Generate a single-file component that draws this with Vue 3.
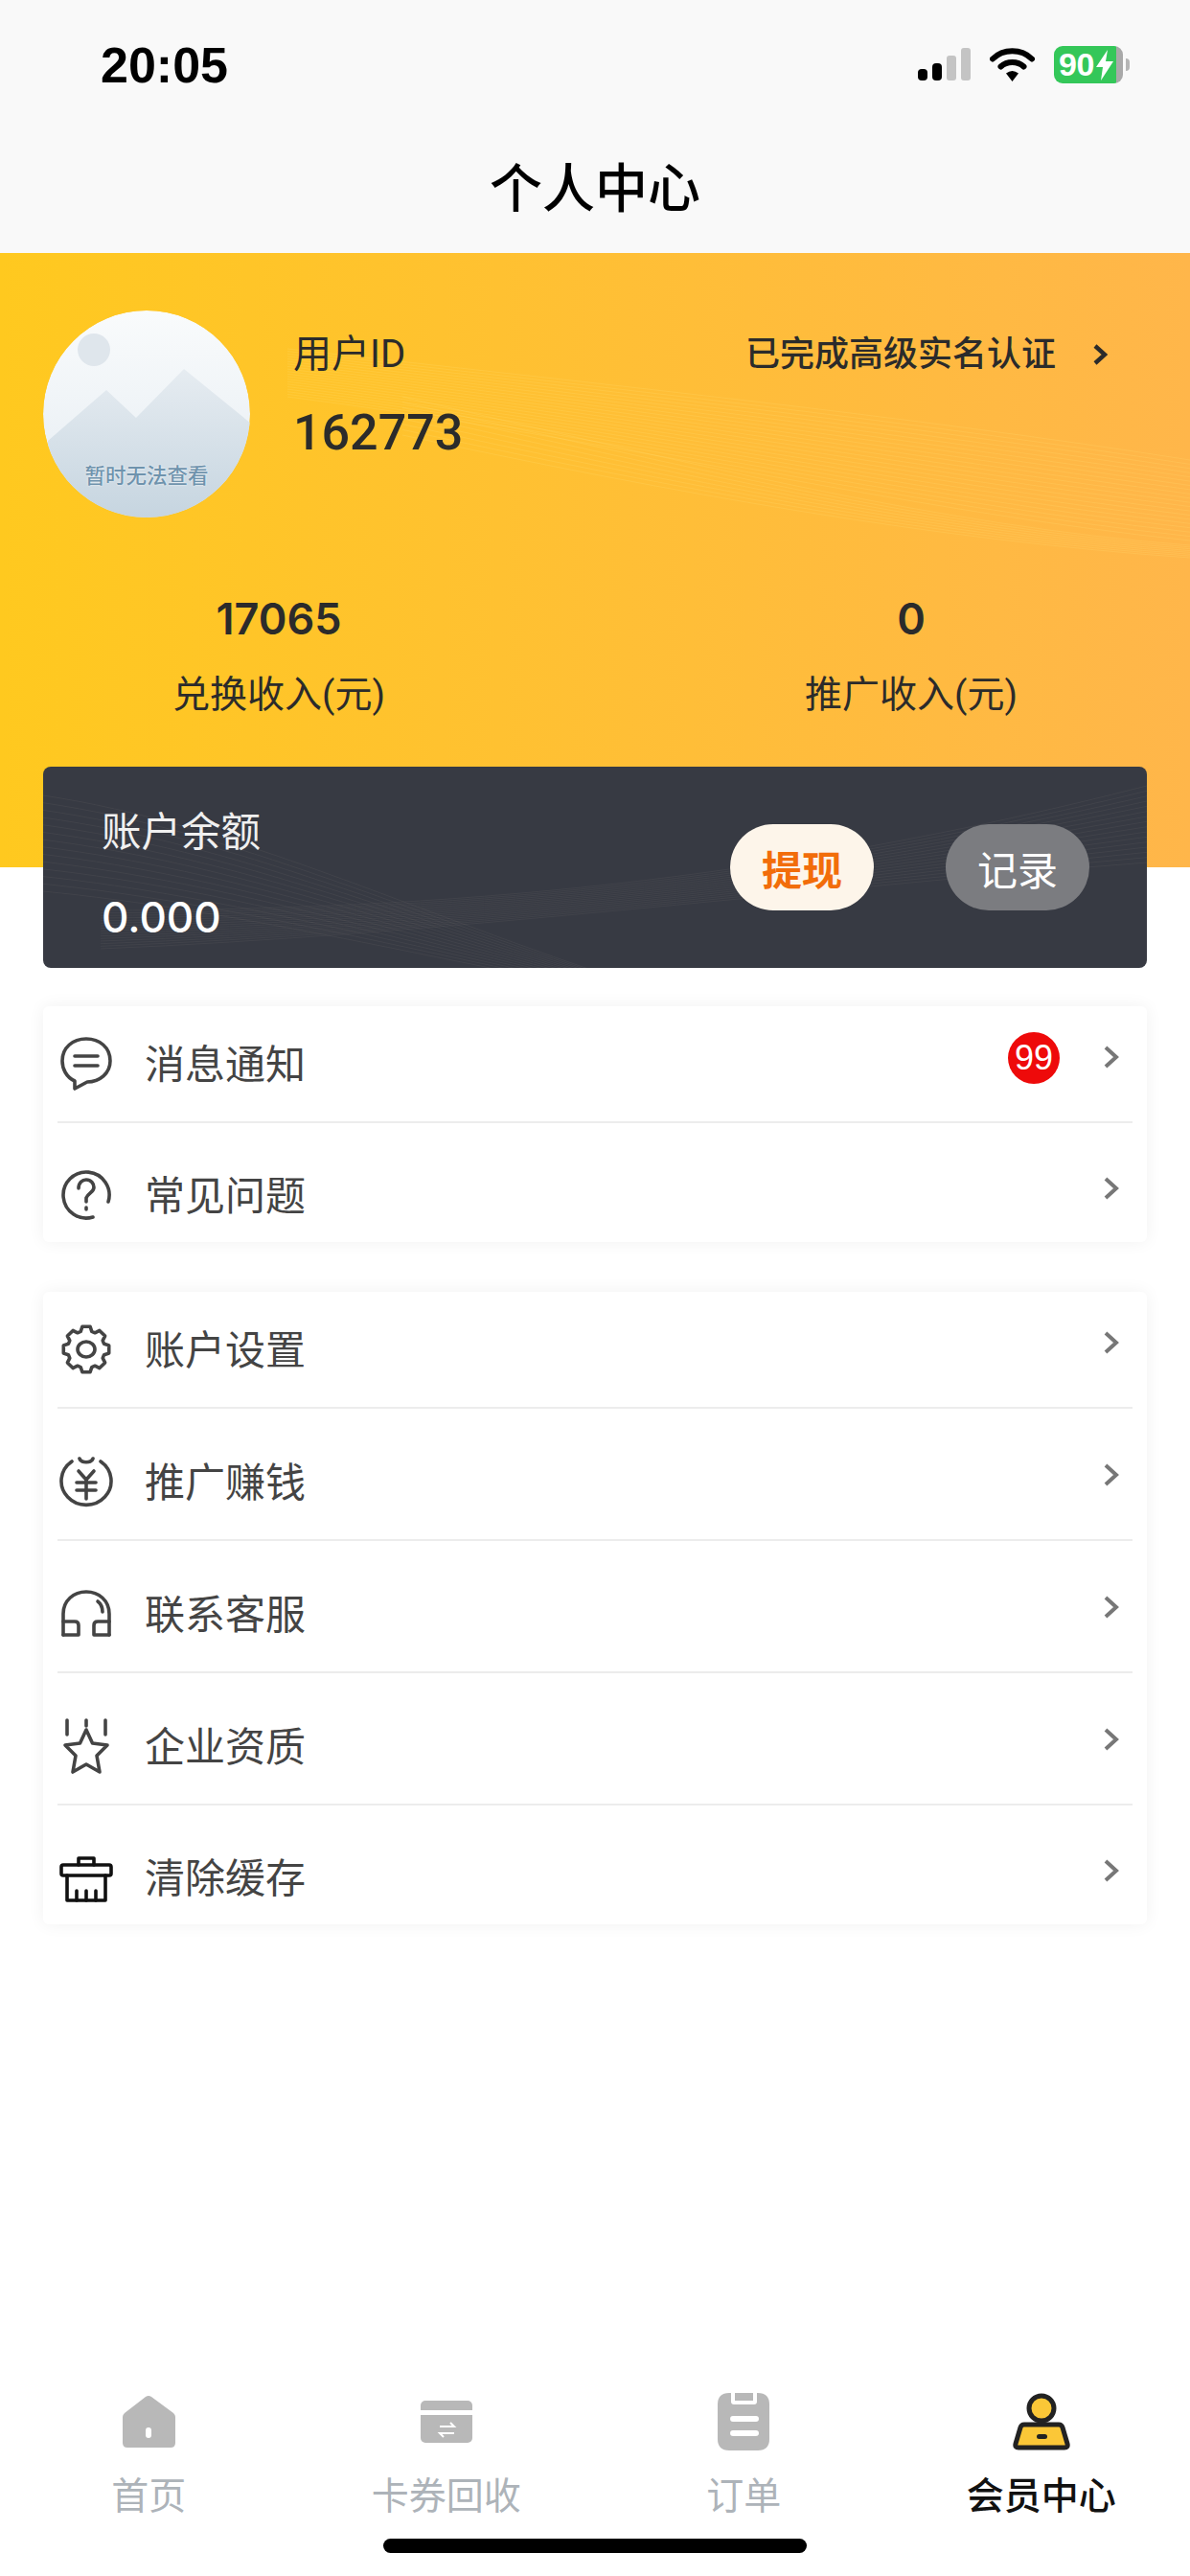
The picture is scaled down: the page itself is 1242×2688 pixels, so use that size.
<template>
  <div class="page">
    <header class="top">
      <div class="status">
        <span class="time">20:05</span>
        <div class="status-icons">
          <svg class="signal" width="55" height="36" viewBox="0 0 55 36">
            <rect x="0" y="22" width="10" height="12" rx="4" fill="#000" />
            <rect x="15" y="16" width="10" height="18" rx="4" fill="#000" />
            <rect x="30" y="8" width="10" height="26" rx="3" fill="#c4c4c4" />
            <rect x="45" y="0" width="10" height="34" rx="3" fill="#c4c4c4" />
          </svg>
          <svg class="wifi" width="47" height="36" viewBox="0 0 47 36">
            <path d="M3 12.5C14 1.5 33 1.5 44 12.5" fill="none" stroke="#000" stroke-width="6" stroke-linecap="round" />
            <path d="M11.5 20.5C18 14.5 29 14.5 35.5 20.5" fill="none" stroke="#000" stroke-width="6" stroke-linecap="round" />
            <path d="M17 27.5Q23.5 22.5 30 27.5L23.5 36Z" fill="#000" />
          </svg>
          <div class="battery">
            <span class="battery-level">90</span>
            <svg class="bolt" width="20" height="32" viewBox="0 0 20 32">
              <path d="M13 0L1 18H8L6 32L19 12H11Z" fill="#fff" />
            </svg>
            <i class="battery-nub"></i>
          </div>
        </div>
      </div>
      <h1 class="title">个人中心</h1>
    </header>

    <section class="hero">
      <svg class="hero-waves" width="1242" height="641" viewBox="0 0 1242 641">
        <path v-for="d in heroWaves" :key="d" :d="d" />
      </svg>

      <div class="profile">
        <div class="avatar">
          <svg width="216" height="216" viewBox="0 0 216 216">
            <defs>
              <linearGradient id="sky" x1="0" y1="0" x2="0" y2="1">
                <stop offset="0" stop-color="#f9fbfc" />
                <stop offset="0.6" stop-color="#edf2f6" />
                <stop offset="1" stop-color="#dfe7ee" />
              </linearGradient>
              <linearGradient id="hill" x1="0" y1="0" x2="0" y2="1">
                <stop offset="0" stop-color="#e6ecf1" />
                <stop offset="1" stop-color="#c6d5e0" />
              </linearGradient>
            </defs>
            <circle cx="108" cy="108" r="108" fill="url(#sky)" />
            <circle cx="53" cy="41" r="17" fill="#dfe6ec" />
            <path d="M5 136L66 83L97 112L147 61L217 118V216H5Z" fill="url(#hill)" />
          </svg>
          <span class="avatar-note">暂时无法查看</span>
        </div>
        <div class="user">
          <div class="user-label">用户ID</div>
          <div class="user-id">162773</div>
        </div>
        <div class="verify">
          <span>已完成高级实名认证</span>
          <svg width="16" height="24" viewBox="0 0 16 24">
            <path d="M3 3L13 12L3 21" fill="none" stroke="#2b2b2b" stroke-width="4.4" />
          </svg>
        </div>
      </div>

      <div class="stats">
        <div class="stat" v-for="stat in stats" :key="stat.label">
          <div class="stat-value">{{ stat.value }}</div>
          <div class="stat-label">{{ stat.label }}</div>
        </div>
      </div>

      <div class="balance">
        <svg class="balance-waves" width="1152" height="210" viewBox="0 0 1152 210">
          <path v-for="d in balanceWaves" :key="d" :d="d" />
        </svg>
        <div class="balance-info">
          <div class="balance-label">账户余额</div>
          <div class="balance-value">0.000</div>
        </div>
        <div class="balance-actions">
          <button class="pill pill-cash">提现</button>
          <button class="pill pill-log">记录</button>
        </div>
      </div>
    </section>

    <section class="menu" v-for="(group, g) in menus" :key="g">
      <div class="row" v-for="item in group" :key="item.label">
        <svg class="row-icon" :class="{ dark: item.dark }" width="60" height="60" viewBox="0 0 60 60">
          <path v-for="d in item.icon" :key="d" :d="d" />
        </svg>
        <span class="row-label">{{ item.label }}</span>
        <span class="badge" v-if="item.badge">{{ item.badge }}</span>
        <svg class="row-arrow" width="16" height="24" viewBox="0 0 16 24">
          <path d="M2 2L13 12L2 22" fill="none" stroke="#777" stroke-width="4" />
        </svg>
      </div>
    </section>

    <nav class="tabbar">
      <div class="tabs">
        <div class="tab">
          <svg width="64" height="64" viewBox="0 0 64 64">
            <path d="M29 6Q32 4 35 6L58 23Q60 25 60 27V54Q60 59 55 59H10Q5 59 5 54V27Q5 25 7 23Z" fill="#b8b8b8" />
            <rect x="29" y="38" width="6" height="11" rx="3" fill="#fff" />
          </svg>
          <span>首页</span>
        </div>
        <div class="tab">
          <svg width="64" height="64" viewBox="0 0 64 64">
            <rect x="5" y="10" width="54" height="44" rx="5" fill="#b8b8b8" />
            <rect x="5" y="20" width="54" height="5" fill="#fff" />
            <path d="M25 37H40L36 33M40 44H25L29 48" fill="none" stroke="#fff" stroke-width="2" />
          </svg>
          <span>卡券回收</span>
        </div>
        <div class="tab">
          <svg width="64" height="64" viewBox="0 0 64 64">
            <path d="M5 14Q5 2 17 2H47Q59 2 59 14V50Q59 62 47 62H17Q5 62 5 50Z" fill="#b8b8b8" />
            <path d="M19 0V11Q19 14 22 14H43Q46 14 46 11V0Z" fill="#fff" />
            <rect x="23" y="2" width="19" height="8" fill="#b8b8b8" />
            <path d="M21 29H45M21 44H45" fill="none" stroke="#fff" stroke-width="6" stroke-linecap="round" />
          </svg>
          <span>订单</span>
        </div>
        <div class="tab active">
          <svg width="64" height="64" viewBox="0 0 64 64">
            <circle cx="32" cy="18" r="13" fill="#fbc737" stroke="#222" stroke-width="5" />
            <path d="M14 35H50Q53 35 54 38L59 55Q60 59 56 59H8Q4 59 5 55L10 38Q11 35 14 35Z" fill="#fbc737" stroke="#222" stroke-width="5" />
            <rect x="27" y="45" width="11" height="5" rx="2.5" fill="#222" />
          </svg>
          <span>会员中心</span>
        </div>
      </div>
      <div class="home-bar"></div>
    </nav>
  </div>
</template>

<script setup>
const stats = [
  { value: '17065', label: '兑换收入(元)' },
  { value: '0', label: '推广收入(元)' },
]

// rounded cog outline for the settings row
function gearOutline() {
  const pts = []
  for (let i = 0; i < 8; i++) {
    const a = (i * Math.PI) / 4
    for (const [off, r] of [[-0.3, 19.5], [-0.17, 24], [0.17, 24], [0.3, 19.5]]) {
      pts.push(`${(30 + r * Math.cos(a + off)).toFixed(1)} ${(30 + r * Math.sin(a + off)).toFixed(1)}`)
    }
  }
  return 'M' + pts.join('L') + 'Z'
}

const menus = [
  [
    {
      label: '消息通知',
      badge: '99',
      icon: [
        'M18 48C9 44 5 35 5 27C5 13 16 4 30 4C44 4 55 13 55 27C55 40 44 49 31 49L18 56Z',
        'M18 22H42',
        'M18 32H42',
      ],
    },
    {
      label: '常见问题',
      icon: [
        'M37 53A24 24 0 1 1 53 37',
        'M22 23C22 17 26 14 30 14C35 14 38 18 38 22C38 27 32 28 30 33V37',
        'M30 43V45',
      ],
    },
  ],
  [
    {
      label: '账户设置',
      icon: [gearOutline(), 'M21 30a9 8 0 1 0 18 0a9 8 0 1 0 -18 0'],
    },
    {
      label: '推广赚钱',
      icon: [
        'M15 9A26 25 0 1 0 45 9',
        'M23 6C25 11 35 11 37 6',
        'M22 19L30 28L38 19',
        'M20 31H40',
        'M20 39H40',
        'M30 28V48',
      ],
    },
    {
      label: '联系客服',
      icon: [
        'M6 52V30C6 16 17 7 30 7C43 7 54 16 54 30V52',
        'M6 38H18Q22 38 22 42V52H6',
        'M54 38H42Q38 38 38 42V52H54',
        'M42 17C46 20 47 24 47 28',
      ],
    },
    {
      label: '企业资质',
      icon: [
        'M30 13L36.5 27L52 29L41 40L44 57L30 49L16 57L19 40L8 29L23.5 27Z',
        'M10 3V18',
        'M30 3V9',
        'M50 3V18',
      ],
    },
    {
      label: '清除缓存',
      dark: true,
      icon: [
        'M6 17H54Q56 17 56 19V26Q56 28 54 28H6Q4 28 4 26V19Q4 17 6 17Z',
        'M22 17V10H38V17',
        'M10 28V54H50V28',
        'M20 44V54',
        'M30 44V54',
        'M40 44V54',
      ],
    },
  ],
]

// fan of fine lines: each line runs through the given points, spread from first to second value
function fan(count, points) {
  const out = []
  for (let i = 0; i < count; i++) {
    const t = i / (count - 1)
    const at = points.map(([x, y0, y1]) => `${x} ${(y0 + (y1 - y0) * t).toFixed(1)}`)
    out.push(`M${at[0]}C${at[1]} ${at[2]} ${at[3]}`)
  }
  return out
}

const heroWaves = [
  ...fan(20, [[300, 100, 150], [620, 136, 190], [950, 170, 270], [1242, 216, 300]]),
  ...fan(8, [[420, 150, 190], [700, 215, 250], [980, 285, 300], [1242, 305, 318]]),
]

const balanceWaves = [
  ...fan(14, [[0, 30, 130], [200, 60, 150], [380, 150, 195], [620, 228, 240]]),
  ...fan(16, [[60, 150, 190], [420, 150, 175], [760, 120, 130], [1152, 20, 100]]),
]
</script>

<style scoped>
.page {
  display: flex;
  flex-direction: column;
  min-height: 2688px;
  background: #fff;
  font-family: Roboto, "Noto Sans CJK SC", sans-serif;
  color: #2b2b2b;
}

.top {
  background: #f9f9f9;
  height: 264px;
}

.status {
  display: flex;
  justify-content: space-between;
  height: 130px;
  padding: 48px 70px 0 105px;
  box-sizing: border-box;
}

.time {
  font-family: "Liberation Sans", sans-serif;
  font-size: 52px;
  line-height: 40px;
  font-weight: 700;
  color: #000;
}

.status-icons {
  display: flex;
  align-items: flex-start;
}

.signal {
  margin-top: 2px;
}

.wifi {
  margin: 1px 20px 0;
}

.battery {
  position: relative;
  display: flex;
  align-items: center;
  width: 72px;
  height: 39px;
  padding-left: 5px;
  box-sizing: border-box;
  border-radius: 9px;
  background: linear-gradient(90deg, #34c759 65px, #a9a9a9 65px);
  color: #fff;
}

.battery-level {
  font-family: "Liberation Sans", sans-serif;
  font-size: 34px;
  line-height: 39px;
  font-weight: 700;
  letter-spacing: -0.5px;
}

.bolt {
  flex: none;
  margin-left: 1px;
}

.battery-nub {
  position: absolute;
  right: -7px;
  top: 13px;
  width: 4px;
  height: 13px;
  border-radius: 0 4px 4px 0;
  background: #b5b5b5;
}

.title {
  margin: 0;
  height: 134px;
  line-height: 134px;
  text-align: center;
  font-size: 55px;
  font-weight: 500;
  color: #000;
}

.hero {
  position: relative;
  height: 641px;
  padding: 60px 45px 0;
  box-sizing: border-box;
  background: linear-gradient(90deg, #ffc91f, #ffb64a);
}

.hero-waves {
  position: absolute;
  left: 0;
  top: 0;
}

.hero-waves path {
  fill: none;
  stroke: rgba(255, 226, 120, 0.2);
  stroke-width: 1;
}

.profile {
  position: relative;
  display: flex;
  align-items: flex-start;
  height: 216px;
}

.avatar {
  position: relative;
  flex: none;
  width: 216px;
  height: 216px;
  border-radius: 50%;
  overflow: hidden;
}

.avatar svg {
  display: block;
}

.avatar-note {
  position: absolute;
  left: 0;
  right: 0;
  top: 160px;
  text-align: center;
  font-size: 21.5px;
  line-height: 26px;
  font-weight: 500;
  color: #6f93ad;
  text-shadow: 0 0 2px #fff;
}

.user {
  margin-left: 45px;
  padding-top: 23px;
}

.user-label {
  font-size: 40px;
  line-height: 46px;
}

.user-id {
  margin-top: 29px;
  font-size: 52px;
  line-height: 60px;
  font-weight: 500;
}

.verify {
  display: flex;
  align-items: center;
  gap: 38px;
  margin-left: auto;
  margin-right: 41px;
  padding-top: 23px;
  font-size: 36px;
  line-height: 46px;
  font-weight: 500;
}

.stats {
  position: relative;
  display: grid;
  grid-template-columns: 440px 440px;
  column-gap: 220px;
  margin: 81px 0 0 26px;
  text-align: center;
}

.stat-value {
  font-family: Inter, Roboto, sans-serif;
  font-size: 45px;
  line-height: 50px;
  font-weight: 600;
}

.stat-label {
  margin-top: 29px;
  font-size: 39px;
  line-height: 50px;
}

.balance {
  position: relative;
  display: flex;
  align-items: center;
  height: 210px;
  margin-top: 50px;
  padding: 0 60px 0 61px;
  border-radius: 8px;
  overflow: hidden;
  background: #373a43;
  color: #fff;
}

.balance-waves {
  position: absolute;
  left: 0;
  top: 0;
}

.balance-waves path {
  fill: none;
  stroke: rgba(255, 240, 220, 0.05);
  stroke-width: 1;
}

.balance-info {
  position: relative;
  align-self: flex-start;
  padding-top: 45px;
}

.balance-label {
  font-size: 41.5px;
  line-height: 48px;
  color: #f0f0f0;
}

.balance-value {
  margin-top: 39px;
  font-family: Inter, Roboto, sans-serif;
  font-size: 44px;
  line-height: 50px;
  font-weight: 500;
}

.balance-actions {
  position: relative;
  display: flex;
  gap: 75px;
  margin-left: auto;
}

.pill {
  width: 150px;
  height: 90px;
  padding: 0;
  border: none;
  border-radius: 45px;
  font-family: inherit;
  font-size: 42px;
}

.pill-cash {
  background: #fdf5ea;
  color: #f26d0a;
  font-weight: 700;
}

.pill-log {
  background: #7b7c80;
  color: #fff;
}

.menu {
  margin: 52px 45px 0;
  padding: 0 15px;
  border-radius: 6px;
  background: #fff;
  box-shadow: 0 0 18px rgba(0, 0, 0, 0.06);
}

.hero + .menu {
  margin-top: 145px;
}

.row {
  display: flex;
  align-items: center;
  height: 138px;
  padding-top: 16px;
  box-sizing: border-box;
  border-bottom: 2px solid #ececec;
}

.row:first-child {
  height: 122px;
  padding-top: 0;
}

.row:last-child {
  height: 124px;
  padding-top: 26px;
  border-bottom: none;
}

.row-icon {
  flex: none;
}

.row-icon path {
  fill: none;
  stroke: #444;
  stroke-width: 3.6;
  stroke-linejoin: round;
  stroke-linecap: round;
}

.row-icon.dark path {
  stroke: #111;
}

.row-label {
  margin: 0 0 6px 31px;
  font-size: 42px;
  color: #444;
}

.badge {
  width: 54px;
  height: 54px;
  margin: 0 0 12px auto;
  border-radius: 50%;
  background: #ee0a0a;
  color: #fff;
  text-align: center;
  font-family: "Liberation Sans", sans-serif;
  font-size: 36px;
  line-height: 54px;
}

.row-arrow {
  flex: none;
  margin: 0 14px 14px 46px;
}

.row-label + .row-arrow {
  margin-left: auto;
}

.tabbar {
  margin-top: auto;
}

.tabs {
  display: grid;
  grid-template-columns: repeat(4, 1fr);
}

.tab {
  display: flex;
  flex-direction: column;
  align-items: center;
  font-size: 39px;
  line-height: 44px;
  color: #adb3b9;
}

.tab svg {
  display: block;
  margin-bottom: 24px;
}

.tab.active {
  color: #111;
  font-weight: 500;
}

.home-bar {
  width: 442px;
  height: 15px;
  margin: 22px auto 24px;
  border-radius: 8px;
  background: #000;
}
</style>

<style>
html,
body {
  margin: 0;
  background: #fff;
}
</style>
